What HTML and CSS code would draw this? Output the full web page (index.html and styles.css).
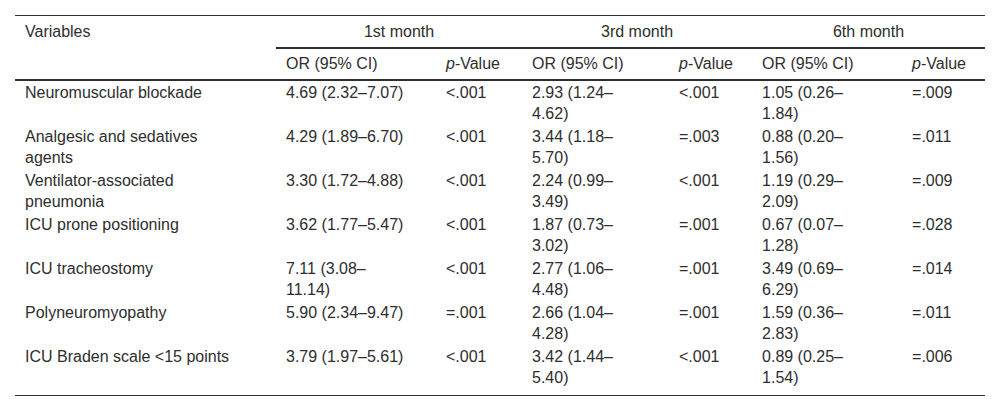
FILE: index.html
```html
<!DOCTYPE html>
<html lang="en">
<head>
<meta charset="utf-8">
<title>Table</title>
<link rel="stylesheet" href="styles.css">
</head>
<body>
<table class="data">
  <colgroup>
    <col class="c-var">
    <col class="c-or1">
    <col class="c-p1">
    <col class="c-or2">
    <col class="c-p2">
    <col class="c-or3">
    <col class="c-p3">
  </colgroup>
  <thead>
    <tr class="h1">
      <th rowspan="2" class="var-head">Variables</th>
      <th colspan="2" class="group">1st month</th>
      <th colspan="2" class="group">3rd month</th>
      <th colspan="2" class="group">6th month</th>
    </tr>
    <tr class="h2">
      <th>OR (95% CI)</th>
      <th><i>p</i>-Value</th>
      <th>OR (95% CI)</th>
      <th><i>p</i>-Value</th>
      <th>OR (95% CI)</th>
      <th><i>p</i>-Value</th>
    </tr>
  </thead>
  <tbody>
    <tr>
      <td class="var">Neuromuscular blockade</td>
      <td class="or1">4.69 (2.32–7.07)</td><td>&lt;.001</td>
      <td class="orn">2.93 (1.24–4.62)</td><td>&lt;.001</td>
      <td class="orn">1.05 (0.26–1.84)</td><td>=.009</td>
    </tr>
    <tr>
      <td class="var">Analgesic and sedatives agents</td>
      <td class="or1">4.29 (1.89–6.70)</td><td>&lt;.001</td>
      <td class="orn">3.44 (1.18–5.70)</td><td>=.003</td>
      <td class="orn">0.88 (0.20–1.56)</td><td>=.011</td>
    </tr>
    <tr>
      <td class="var">Ventilator-associated pneumonia</td>
      <td class="or1">3.30 (1.72–4.88)</td><td>&lt;.001</td>
      <td class="orn">2.24 (0.99–3.49)</td><td>&lt;.001</td>
      <td class="orn">1.19 (0.29–2.09)</td><td>=.009</td>
    </tr>
    <tr>
      <td class="var">ICU prone positioning</td>
      <td class="or1">3.62 (1.77–5.47)</td><td>&lt;.001</td>
      <td class="orn">1.87 (0.73–3.02)</td><td>=.001</td>
      <td class="orn">0.67 (0.07–1.28)</td><td>=.028</td>
    </tr>
    <tr>
      <td class="var">ICU tracheostomy</td>
      <td class="or1">7.11 (3.08–11.14)</td><td>&lt;.001</td>
      <td class="orn">2.77 (1.06–4.48)</td><td>=.001</td>
      <td class="orn">3.49 (0.69–6.29)</td><td>=.014</td>
    </tr>
    <tr>
      <td class="var">Polyneuromyopathy</td>
      <td class="or1">5.90 (2.34–9.47)</td><td>=.001</td>
      <td class="orn">2.66 (1.04–4.28)</td><td>=.001</td>
      <td class="orn">1.59 (0.36–2.83)</td><td>=.011</td>
    </tr>
    <tr class="last">
      <td class="var">ICU Braden scale &lt;15 points</td>
      <td class="or1">3.79 (1.97–5.61)</td><td>&lt;.001</td>
      <td class="orn">3.42 (1.44–5.40)</td><td>&lt;.001</td>
      <td class="orn">0.89 (0.25–1.54)</td><td>=.006</td>
    </tr>
  </tbody>
</table>
</body>
</html>
```

FILE: styles.css
```css
html, body {
  margin: 0;
  padding: 0;
  background: #ffffff;
}

body {
  font-family: "Liberation Sans", Arial, sans-serif;
  font-size: 16px;
  color: #2e2e2e;
}

.data {
  width: 970px;
  margin: 15px 15px 0 15px;
  table-layout: fixed;
  border-collapse: separate;
  border-spacing: 0;
  border-top: 1px solid #2e2e2e;
  border-bottom: 1px solid #2e2e2e;
  line-height: 21px;
}

.c-var { width: 261px; }
.c-or1 { width: 160px; }
.c-p1  { width: 86px; }
.c-or2 { width: 147px; }
.c-p2  { width: 83px; }
.c-or3 { width: 150px; }
.c-p3  { width: 83px; }

.data th,
.data td {
  font-weight: normal;
  text-align: left;
  vertical-align: top;
  padding: 1px 4px 1px 10px;
}

.data .h1 th {
  padding-top: 5px;
  padding-bottom: 5px;
}

.data .group {
  text-align: center;
  padding-left: 10px;
  padding-right: 10px;
  border-bottom: 2px solid #2e2e2e;
}

.data .var-head {
  border-bottom: 2px solid #2e2e2e;
}

.data .h2 th {
  padding-top: 4px;
  padding-bottom: 5px;
  white-space: nowrap;
  border-bottom: 2px solid #2e2e2e;
}

.data td.var {
  padding-right: 37px;
}

.data td.or1 {
  padding-right: 28px;
}

.data td.orn {
  padding-right: 52px;
}

.data .last td {
  padding-bottom: 7px;
}
```
